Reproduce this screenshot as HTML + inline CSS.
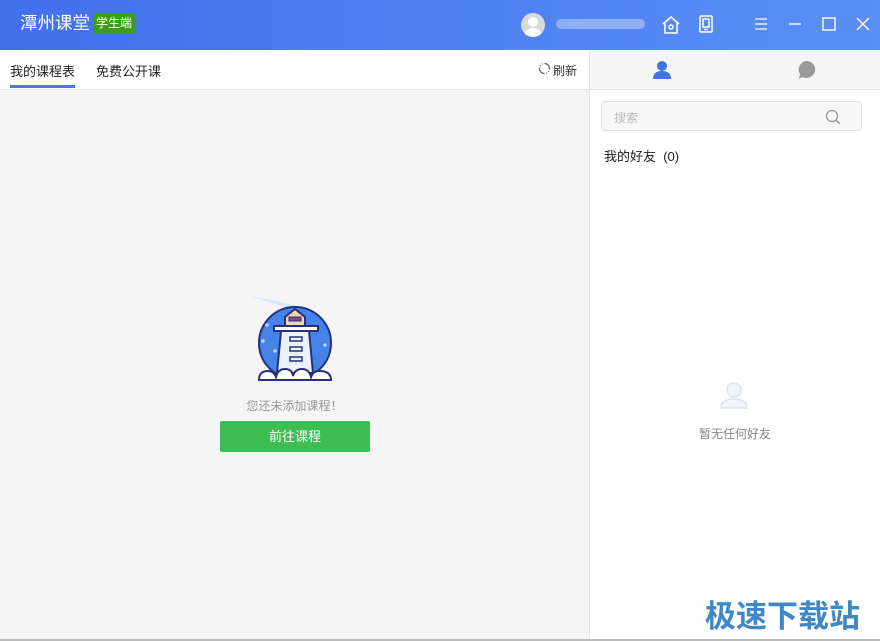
<!DOCTYPE html>
<html><head><meta charset="utf-8"><style>
*{margin:0;padding:0;box-sizing:border-box}
body{width:880px;height:641px;overflow:hidden;background:#f5f5f5;font-family:"Liberation Sans","Noto Sans CJK SC",sans-serif;position:relative}
.hdr{position:absolute;left:0;top:0;width:880px;height:50px;background:linear-gradient(90deg,#4170eb,#5a8ff6)}
.abs{position:absolute}
.left{position:absolute;left:0;top:50px;width:589px;height:591px;background:#f5f5f5}
.tabs{position:absolute;left:0;top:50px;width:589px;height:40px;background:#fff;border-bottom:1px solid #e6e6e6}
.right{position:absolute;left:589px;top:50px;width:291px;height:591px;background:#fff;border-left:1px solid #e4e4e4}
</style></head><body>
<div class="hdr"></div>
<div class="abs" style="left:20px;top:12px;color:#fff;font-size:17.5px;line-height:22px">潭州课堂</div>
<div class="abs" style="left:93px;top:14px;background:#3d9c1e;color:#fff;font-size:12px;padding:1px 3px;line-height:17px">学生端</div>
<div class="abs" style="left:521px;top:13px;width:24px;height:24px;border-radius:50%;background:#d9d9d9;overflow:hidden"><div class="abs" style="left:7px;top:4px;width:10px;height:10px;border-radius:50%;background:#fff"></div><div class="abs" style="left:3px;top:15px;width:18px;height:12px;border-radius:9px 9px 0 0;background:#fff"></div></div>
<div class="abs" style="left:556px;top:19px;width:89px;height:10px;border-radius:5px;background:rgba(255,255,255,.35)"></div>
<svg class="abs" style="left:660px;top:14px" width="22" height="22" viewBox="0 0 22 22" fill="none" stroke="#fff" stroke-width="1.5"><path d="M3 10 L11 3 L19 10 M5 9 V19 H17 V9"/><circle cx="11" cy="13" r="2"/></svg>
<svg class="abs" style="left:697px;top:14px" width="18" height="20" viewBox="0 0 18 20" fill="none" stroke="#fff" stroke-width="1.5"><rect x="3" y="2" width="12" height="16" rx="1"/><rect x="6" y="5" width="6" height="8"/><path d="M7 15.5h4"/></svg>
<svg class="abs" style="left:753px;top:16px" width="16" height="16" viewBox="0 0 16 16" stroke="#fff" stroke-width="1.3"><path d="M2 3h12M2 8h12M2 13h12"/></svg>
<svg class="abs" style="left:787px;top:16px" width="16" height="16" stroke="#fff" stroke-width="1.4"><path d="M2 8h12"/></svg>
<svg class="abs" style="left:821px;top:16px" width="16" height="16" fill="none" stroke="#fff" stroke-width="1.4"><rect x="2" y="2" width="12" height="12"/></svg>
<svg class="abs" style="left:855px;top:16px" width="16" height="16" stroke="#fff" stroke-width="1.4"><path d="M2 2L14 14M14 2L2 14"/></svg>

<div class="left"></div>
<div class="tabs"></div>
<div class="abs" style="left:10px;top:61px;font-size:13px;color:#222">我的课程表</div>
<div class="abs" style="left:10px;top:85px;width:65px;height:3px;background:#4a78e6"></div>
<div class="abs" style="left:96px;top:61px;font-size:13px;color:#222">免费公开课</div>
<svg class="abs" style="left:538px;top:62px" width="13" height="13" fill="none" stroke="#666" stroke-width="1.2"><path d="M6.5 1.5A5 5 0 0 1 11.5 6.5M6.5 11.5A5 5 0 0 1 1.5 6.5"/><path d="M1.5 6.5A5 5 0 0 1 5 1.7M11.5 6.5A5 5 0 0 1 8 11.3" stroke-dasharray="1 1.5"/></svg>
<div class="abs" style="left:553px;top:62px;font-size:12px;color:#333">刷新</div>

<svg class="abs" style="left:245px;top:293px" width="95" height="90" viewBox="0 0 95 90">
<path d="M5 3 L50 12 L52 18 Z" fill="#d4e6f8"/>
<circle cx="50" cy="50" r="36" fill="#4683e8" stroke="#27307a" stroke-width="2"/>
<circle cx="22" cy="32" r="1.8" fill="#b9d3fa"/><circle cx="18" cy="48" r="1.8" fill="#b9d3fa"/><circle cx="80" cy="52" r="1.8" fill="#b9d3fa"/><circle cx="30" cy="58" r="1.8" fill="#b9d3fa"/>
<path d="M40 33 V24 L50 16 L60 24 V33 Z" fill="#f2d7b1" stroke="#27307a" stroke-width="2"/>
<rect x="44" y="24" width="12" height="4" fill="#8a4a7e" stroke="#27307a" stroke-width="1"/>
<rect x="29" y="33" width="44" height="5" fill="#fff" stroke="#27307a" stroke-width="2"/>
<path d="M36 38 L32 80 H68 L64 38 Z" fill="#eaf1fb" stroke="#27307a" stroke-width="2"/>
<rect x="45" y="44" width="12" height="4" fill="#eaf1fb" stroke="#27307a" stroke-width="1.5"/>
<rect x="45" y="54" width="12" height="4" fill="#eaf1fb" stroke="#27307a" stroke-width="1.5"/>
<rect x="45" y="64" width="12" height="4" fill="#eaf1fb" stroke="#27307a" stroke-width="1.5"/>
<path d="M14 87 Q14 78 23 78 Q29 78 31 84 Q33 76 40 76 Q47 76 48 83 Q50 76 57 76 Q64 76 66 84 Q68 78 74 78 Q86 78 86 87 Z" fill="#fff" stroke="#27307a" stroke-width="2"/>
</svg>
<div class="abs" style="left:0;top:397px;width:589px;text-align:center;font-size:12px;color:#999">您还未添加课程！</div>
<div class="abs" style="left:220px;top:421px;width:150px;height:31px;background:#3fbd55;border-radius:2px;color:#fff;font-size:13px;text-align:center;line-height:31px">前往课程</div>

<div class="right"></div>
<div class="abs" style="left:590px;top:50px;width:290px;height:40px;background:#f5f5f5;border-bottom:1px solid #e6e6e6"></div>
<svg class="abs" style="left:652px;top:60px" width="20" height="20" viewBox="0 0 20 20" fill="#4373e6"><circle cx="10" cy="6" r="5"/><path d="M1 19 Q1 11 10 11 Q19 11 19 19 Z"/></svg>
<svg class="abs" style="left:797px;top:60px" width="20" height="20" viewBox="0 0 20 20" fill="#999"><path d="M10 1A9 8.5 0 1 1 5 17L2 19L3 14A9 8.5 0 0 1 10 1Z"/></svg>
<div class="abs" style="left:601px;top:101px;width:261px;height:30px;border:1px solid #e2e2e2;border-radius:3px;background:#f7f7f7"></div>
<div class="abs" style="left:614px;top:109px;font-size:12px;color:#bbb">搜索</div>
<svg class="abs" style="left:824px;top:108px" width="18" height="18" fill="none" stroke="#999" stroke-width="1.3"><circle cx="8" cy="8" r="5.5"/><path d="M12 12L16 16"/></svg>
<div class="abs" style="left:604px;top:146px;font-size:13px;color:#222">我的好友&nbsp;&nbsp;(0)</div>
<svg class="abs" style="left:717px;top:378px" width="34" height="34" viewBox="0 0 34 34"><circle cx="17" cy="12" r="7" fill="#f0f3f8" stroke="#dbe3ef" stroke-width="1.5"/><path d="M4 30 Q4 21 17 21 Q30 21 30 30 Z" fill="#f0f3f8" stroke="#dbe3ef" stroke-width="1.5"/></svg>
<div class="abs" style="left:590px;top:425px;width:290px;text-align:center;font-size:12px;color:#888">暂无任何好友</div>
<div class="abs" style="left:705px;top:591px;font-size:31px;font-weight:bold;color:#3f88c8">极速下载站</div>
<div class="abs" style="left:0;top:639px;width:880px;height:2px;background:#bbb"></div>
</body></html>
